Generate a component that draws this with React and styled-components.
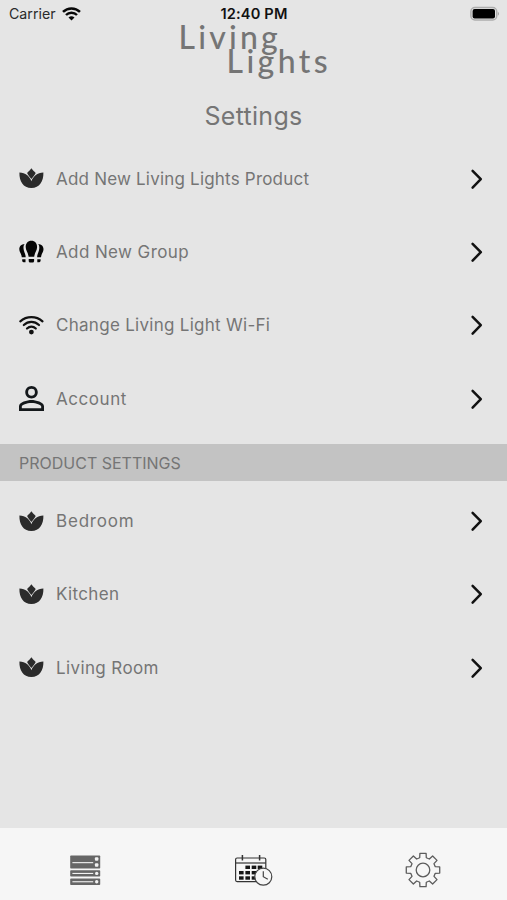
import styled, { createGlobalStyle } from 'styled-components';

const GlobalStyle = createGlobalStyle`
  * {
    box-sizing: border-box;
  }
  body {
    margin: 0;
    background: #e5e5e5;
    font-family: Inter, 'Liberation Sans', sans-serif;
  }
`;

const Screen = styled.div`
  display: flex;
  flex-direction: column;
  height: 900px;
  background: #e5e5e5;
  color: #757575;
`;

const StatusBar = styled.header`
  display: grid;
  grid-template-columns: 1fr auto 1fr;
  align-items: center;
  height: 25px;
  padding: 2px 8px 0 9px;
  color: #111;
`;

const Carrier = styled.div`
  display: flex;
  align-items: center;
  gap: 6px;
  font-size: 14.2px;
  color: #2a2a2a;
`;

const Clock = styled.time`
  font-size: 14.6px;
  font-weight: 600;
  letter-spacing: 0.15px;
`;

const Battery = styled.div`
  display: flex;
  justify-content: flex-end;
`;

const Logo = styled.div`
  display: flex;
  flex-direction: column;
  width: 150px;
  height: 55px;
  margin: 0 auto;
  font-family: Lato, sans-serif;
  font-size: 32px;
  font-weight: 500;
  line-height: 24px;
  color: #757575;
`;

const LogoWord = styled.span`
  padding-left: ${({ $indent }) => $indent}px;
  letter-spacing: ${({ $tracking }) => $tracking}px;
  white-space: nowrap;
`;

const Title = styled.h1`
  margin: 16px 0 0;
  height: 46px;
  padding-top: 4px;
  text-align: center;
  font-size: 25px;
  font-weight: 400;
  line-height: 32px;
  letter-spacing: 0.3px;
`;

const List = styled.ul`
  margin: 0;
  padding: 0;
  list-style: none;
`;

const Row = styled.li`
  display: grid;
  grid-template-columns: 25px 1fr 14px;
  align-items: center;
  column-gap: 12px;
  height: 73.3px;
  padding: 0 23px 0 19px;
`;

const RowLabel = styled.span`
  font-size: 17px;
  letter-spacing: ${({ $tracking }) => $tracking}px;
  white-space: nowrap;
`;

const SectionHeader = styled.h2`
  display: flex;
  align-items: center;
  height: 36.5px;
  margin: 9px 0 3.8px;
  padding: 1px 0 0 19px;
  background: #c3c3c3;
  font-size: 16px;
  font-weight: 400;
`;

const TabBar = styled.nav`
  display: grid;
  grid-template-columns: repeat(3, 1fr);
  place-items: center;
  height: 72.5px;
  margin-top: auto;
  padding-top: 13px;
  background: #f6f6f6;
`;

const Icon = styled.svg`
  display: block;
  overflow: visible;
`;

function LotusIcon() {
  return (
    <Icon width="25" height="21" viewBox="0 0 25 21" fill="#2b2b2b">
      <path d="M12.4 0.2C13.6 2 15.2 3.2 16.7 4.9C15.8 7.2 14.1 8.8 12.4 11C10.7 8.8 9 7.2 8.1 4.9C9.6 3.2 11.2 2 12.4 0.2Z" />
      <path d="M0.4 4.6C3.5 4.9 6 5.6 8 7.1C9.8 8.6 11.5 10.6 12.4 13.2C13.3 10.6 15 8.6 16.8 7.1C18.8 5.6 21.3 4.9 24.4 4.6C24.6 13.5 20.6 20.1 12.4 20.1C4.2 20.1 0.2 13.5 0.4 4.6Z" />
    </Icon>
  );
}

function BulbsIcon() {
  return (
    <Icon width="25" height="24" viewBox="0 0 25 24" fill="#050505">
      <path d="M12.4 0.8C16 0.8 18.1 3.5 18.1 7C18.1 10.4 15.8 12.2 15.2 16.7H9.6C9 12.2 6.7 10.4 6.7 7C6.7 3.5 8.8 0.8 12.4 0.8Z" />
      <path d="M9.7 18.9H15.1V21Q15 22.5 13.7 22.5H11.1Q9.8 22.5 9.7 21Z" />
      <path d="M5.6 3.9C2.4 4 0.3 6.2 0.3 9.3C0.3 12.2 2.4 13.4 2.8 17.3H6.7C6.6 13.4 4.6 11.8 4.5 8.3C4.4 6.2 4.8 5 5.6 3.9Z" />
      <path d="M19.2 3.9C22.4 4 24.5 6.2 24.5 9.3C24.5 12.2 22.4 13.4 22 17.3H18.1C18.2 13.4 20.2 11.8 20.3 8.3C20.4 6.2 20 5 19.2 3.9Z" />
      <path d="M3.2 19.3H6.5V22.3H4.5Q3.2 22 3.2 20.6Z" />
      <path d="M21.6 19.3H18.3V22.3H20.3Q21.6 22 21.6 20.6Z" />
    </Icon>
  );
}

function WifiIcon() {
  return (
    <Icon
      width="25"
      height="19"
      viewBox="0 0 25 19"
      fill="none"
      stroke="#111"
      strokeWidth="2.2"
      strokeLinecap="round"
    >
      <path d="M1.3 5.3Q6 1.2 12.4 1.2T23.5 5.3" />
      <path d="M4.8 9Q8.2 5.9 12.4 5.9T20 9" />
      <path d="M8 12.5Q10 10.6 12.4 10.6T16.8 12.5" />
      <circle cx="12.4" cy="16.1" r="2.4" fill="#111" stroke="none" />
    </Icon>
  );
}

function PersonIcon() {
  return (
    <Icon width="25" height="25" viewBox="4 4 16 16" fill="#14181b">
      <path d="M12 5.8a2.2 2.2 0 1 1 0 4.4a2.2 2.2 0 0 1 0-4.4m0 9c3.1 0 6.2 1.4 6.2 2.2v1.2H5.8V17c0-.8 3.1-2.2 6.2-2.2M12 4C9.79 4 8 5.79 8 8s1.79 4 4 4 4-1.79 4-4-1.79-4-4-4zm0 9c-2.67 0-8 1.34-8 4v3h16v-3c0-2.66-5.33-4-8-4z" />
    </Icon>
  );
}

function ChevronIcon() {
  return (
    <Icon width="14" height="20" viewBox="0 0 14 20">
      <path
        d="M2.6 1.8L10.8 10.2L2.6 18.6"
        fill="none"
        stroke="#111"
        strokeWidth="2.5"
        strokeLinecap="round"
        strokeLinejoin="round"
      />
    </Icon>
  );
}

function SignalIcon() {
  return (
    <Icon width="19" height="14" viewBox="0 0 19 14" fill="none" stroke="#080808">
      <path d="M1 4.9Q4.6 1.4 9.5 1.4T18 4.9" strokeWidth="2.5" />
      <path d="M4 8Q6.2 5.7 9.5 5.7T15 8" strokeWidth="2.4" />
      <path d="M6.5 10.4Q9.5 8.2 12.5 10.4L9.5 13.4Z" fill="#080808" stroke="none" />
    </Icon>
  );
}

function BatteryIcon() {
  return (
    <Icon width="29" height="14" viewBox="0 0 29 14">
      <rect x="0.9" y="0.5" width="25.8" height="12.4" rx="4" fill="none" stroke="#adadad" strokeWidth="1.5" />
      <rect x="2.6" y="2" width="22.4" height="9.4" rx="2" fill="#000" />
      <path d="M27.9 4.7Q30 6.7 27.9 8.7Z" fill="#9d9d9d" />
    </Icon>
  );
}

function ServerIcon() {
  return (
    <Icon width="30" height="31" viewBox="0 0 30 31">
      <g fill="#666">
        <rect x="0.2" y="0.4" width="30" height="13.2" rx="0.8" />
        <rect x="0.2" y="15.3" width="30" height="6.3" rx="0.8" />
        <rect x="0.2" y="23.6" width="30" height="6.4" rx="0.8" />
      </g>
      <g fill="#f2f2f2">
        <rect x="2.4" y="7.1" width="20.8" height="1.1" />
        <rect x="2.4" y="17.9" width="20.8" height="1.1" />
        <rect x="2.4" y="26.2" width="20.8" height="1.1" />
        <rect x="24.9" y="2.2" width="3.5" height="3.5" rx="1" />
        <rect x="24.9" y="8.3" width="3.5" height="3.5" rx="1" />
        <circle cx="26.7" cy="18.4" r="1.7" />
        <circle cx="26.7" cy="26.8" r="1.7" />
      </g>
    </Icon>
  );
}

const calendarDays = [
  [12.7, 12.3],
  [19, 12.3],
  [25, 12.3],
  [6.3, 17.7],
  [12.7, 17.7],
  [19, 17.7],
  [6.3, 23],
  [12.7, 23],
  [19, 23],
];

function CalendarIcon() {
  return (
    <Icon width="37" height="31" viewBox="0 0 37 31" fill="none" stroke="#333" strokeWidth="1.2">
      <rect x="0.6" y="3" width="30.2" height="23.6" rx="1.5" />
      <path d="M0.6 8H30.8" />
      <path d="M7.4 0V5.6M24.6 0V5.6" strokeWidth="1.5" />
      <g fill="#161616" stroke="none">
        {calendarDays.map(([x, y]) => (
          <rect key={`${x}-${y}`} x={x - 2.3} y={y - 1.7} width="4.6" height="3.4" />
        ))}
      </g>
      <circle cx="28.3" cy="21.7" r="8.5" fill="#f6f6f6" stroke="#444" />
      <path d="M28.3 16.2V21.7L32.8 24.3" stroke="#444" />
    </Icon>
  );
}

// Eight teeth, each one a trapezoid sitting on the root circle
function gearPath() {
  const point = (radius, degrees) => {
    const angle = (degrees * Math.PI) / 180;
    const x = 18 + radius * Math.cos(angle);
    const y = 18 + radius * Math.sin(angle);
    return `${x.toFixed(2)} ${y.toFixed(2)}`;
  };
  const points = [];
  for (let tooth = 0; tooth < 8; tooth++) {
    const a = tooth * 45;
    points.push(point(12.7, a - 15), point(17, a - 10.5));
    points.push(point(17, a + 10.5), point(12.7, a + 15));
  }
  return `M${points.join('L')}Z`;
}

function GearIcon() {
  return (
    <Icon
      width="36"
      height="36"
      viewBox="0 0 36 36"
      fill="none"
      stroke="#5c5c5c"
      strokeWidth="1.3"
      strokeLinejoin="round"
    >
      <path d={gearPath()} />
      <circle cx="18" cy="18" r="6.8" />
    </Icon>
  );
}

const actions = [
  { label: 'Add New Living Lights Product', icon: LotusIcon, tracking: 0.2 },
  { label: 'Add New Group', icon: BulbsIcon, tracking: 0.39 },
  { label: 'Change Living Light Wi-Fi', icon: WifiIcon, tracking: 0.28 },
  { label: 'Account', icon: PersonIcon, tracking: 0.55 },
];

const products = [
  { label: 'Bedroom', icon: LotusIcon, tracking: 0.8 },
  { label: 'Kitchen', icon: LotusIcon, tracking: 0.35 },
  { label: 'Living Room', icon: LotusIcon, tracking: 0.38 },
];

function SettingsList({ items }) {
  return (
    <List>
      {items.map(({ label, icon: ItemIcon, tracking }) => (
        <Row key={label}>
          <ItemIcon />
          <RowLabel $tracking={tracking}>{label}</RowLabel>
          <ChevronIcon />
        </Row>
      ))}
    </List>
  );
}

export default function App() {
  return (
    <>
      <GlobalStyle />
      <Screen>
        <StatusBar>
          <Carrier>
            Carrier
            <SignalIcon />
          </Carrier>
          <Clock>12:40 PM</Clock>
          <Battery>
            <BatteryIcon />
          </Battery>
        </StatusBar>
        <Logo>
          <LogoWord $indent={0} $tracking={3.2}>Living</LogoWord>
          <LogoWord $indent={48} $tracking={3.4}>Lights</LogoWord>
        </Logo>
        <Title>Settings</Title>
        <SettingsList items={actions} />
        <SectionHeader>PRODUCT SETTINGS</SectionHeader>
        <SettingsList items={products} />
        <TabBar>
          <ServerIcon />
          <CalendarIcon />
          <GearIcon />
        </TabBar>
      </Screen>
    </>
  );
}
